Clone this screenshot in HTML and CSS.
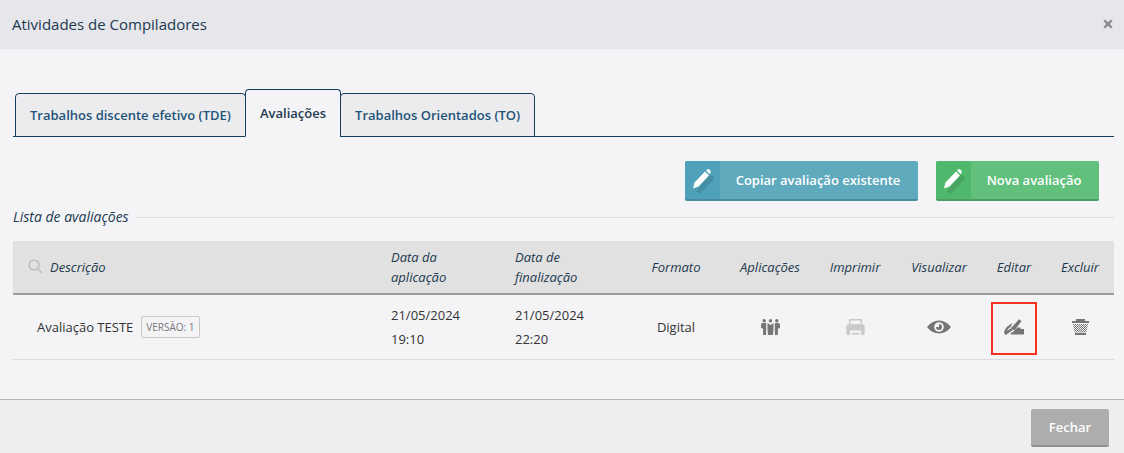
FILE: index.html
```html
<!DOCTYPE html>
<html lang="pt-BR">
<head>
<meta charset="utf-8">
<title>Atividades de Compiladores</title>
<link rel="stylesheet" href="styles.css">
</head>
<body>
<div class="modal">
  <header class="modal-header">
    <h1 class="modal-title">Atividades de Compiladores</h1>
    <svg class="close" viewBox="0 0 10 10" width="10" height="10"><path d="M2 0.500 5 3.200 8 0.500 9.600 2 6.800 5 9.600 8 8 9.500 5 6.800 2 9.500 0.400 8 3.200 5 0.400 2Z"/></svg>
  </header>
  <main class="modal-body">
    <nav class="tabs">
      <a class="tab">Trabalhos discente efetivo (TDE)</a>
      <a class="tab active">Avaliações</a>
      <a class="tab">Trabalhos Orientados (TO)</a>
    </nav>
    <div class="actions">
      <button class="btn btn-blue"><span class="btn-icon"><svg viewBox="0 0 35 38" width="35" height="38"><path class="shade" d="M11 30.500 24 14 29 15.500 28 19 15 32.500Z"/><path class="pen" d="M8 27.500 9.500 21.500 20 10.500 24 14.500 13.500 25.500Z"/><path class="pen" d="M21 9.500 22.500 8.300Q23.300 7.800 24.200 8.500L25.500 9.800Q26.200 10.600 25.500 11.500L24.800 13.300Z"/></svg></span><span class="btn-label">Copiar avaliação existente</span></button>
      <button class="btn btn-green"><span class="btn-icon"><svg viewBox="0 0 35 38" width="35" height="38"><path class="shade" d="M11 30.500 24 14 29 15.500 28 19 15 32.500Z"/><path class="pen" d="M8 27.500 9.500 21.500 20 10.500 24 14.500 13.500 25.500Z"/><path class="pen" d="M21 9.500 22.500 8.300Q23.300 7.800 24.200 8.500L25.500 9.800Q26.200 10.600 25.500 11.500L24.800 13.300Z"/></svg></span><span class="btn-label">Nova avaliação</span></button>
    </div>
    <div class="legend"><span class="legend-text">Lista de avaliações</span><span class="legend-line"></span></div>
    <div class="grid grid-head">
      <div class="cell-desc"><svg class="search" viewBox="0 0 16 16" width="15" height="15"><circle cx="6.500" cy="6.500" r="5.300"/><path d="M10.500 10.500 15 15"/></svg>Descrição</div>
      <div class="cell-left">Data da<br>aplicação</div>
      <div class="cell-left cell-third">Data de<br>finalização</div>
      <div class="cell-center">Formato</div>
      <div class="cell-center">Aplicações</div>
      <div class="cell-center">Imprimir</div>
      <div class="cell-center">Visualizar</div>
      <div class="cell-center">Editar</div>
      <div class="cell-center">Excluir</div>
    </div>
    <div class="grid grid-row">
      <div class="cell-name">Avaliação TESTE<span class="badge">VERSÃO: 1</span></div>
      <div class="cell-left dates">21/05/2024<br>19:10</div>
      <div class="cell-left cell-third dates">21/05/2024<br>22:20</div>
      <div class="cell-center">Digital</div>
      <div class="cell-center"><svg class="icon" viewBox="0 0 19 16" width="19" height="16"><circle cx="3.200" cy="1.700" r="1.700"/><circle cx="9.500" cy="1.700" r="1.700"/><circle cx="15.800" cy="1.700" r="1.700"/><path d="M0 5 1.500 4H5.200V10L5 16H2.200L2 9.500 0 9Z"/><path d="M6.500 4.200 8 5 9.500 6 11 5 12.500 4.200V10L12 16H7L6.500 10Z"/><path d="M19 5 17.500 4H13.800V10L14 16H16.800L17 9.500 19 9Z"/></svg></div>
      <div class="cell-center"><svg class="icon" viewBox="0 0 19 17" width="19" height="17"><path d="M3.700 .8H15.300V6H3.700Z" fill="none" stroke="#c8c8c8" stroke-width="1.500"/><path d="M1.500 5.500H17.500Q18.700 5.500 18.700 7V14.500Q18.700 16 17.500 16H15V11.500H4V16H1.500Q.3 16 .3 14.500V7Q.3 5.500 1.500 5.500Z" fill="#cacaca"/><path d="M5.500 13.500H13.500V16H5.500Z" fill="#d6d6d6"/></svg></div>
      <div class="cell-center"><svg class="icon" viewBox="0 0 24 14" width="24" height="14"><path fill-rule="evenodd" d="M0 7Q5 .5 12 .5T24 7Q19 13.500 12 13.500T0 7ZM12 2.200A4.800 4.800 0 1 0 12 11.800 4.800 4.800 0 1 0 12 2.200ZM12 4A3 3 0 1 1 9 7H12Z"/></svg></div>
      <div class="cell-center edit-cell"><svg class="icon" viewBox="0 0 20 16" width="20" height="16"><path d="M0 13Q1.500 7.500 8.500 4L6.500 8Q4 9.500 2.800 12Q5 10.200 7.500 9.500L8.500 11.500Q5.500 12.500 3.500 15L1 16Z"/><path d="M6.500 9.500 15 .3 17.500 2 10.500 11.500Z"/><path d="M9.500 12.500 13.500 8.500H16.500V10H20V15.500H8Q5.500 15.500 7 14Z"/></svg><span class="highlight"></span></div>
      <div class="cell-center"><svg class="icon" viewBox="0 0 17 16" width="17" height="16"><defs><pattern id="dither" width="2" height="2" patternUnits="userSpaceOnUse"><rect width="1" height="1"/><rect x="1" y="1" width="1" height="1"/></pattern></defs><path d="M4 0H13V2H4Z"/><path d="M0 2H17V4H0Z"/><path d="M1 5H16L14.500 13.500H2.500Z" fill="url(#dither)"/><path d="M3 14H14V16H3Z"/></svg></div>
    </div>
  </main>
  <footer class="modal-footer"><button class="btn-close">Fechar</button></footer>
</div>
</body>
</html>
```
FILE: styles.css
```css
* { box-sizing: border-box; }
html, body { margin: 0; height: 100%; overflow: hidden; }
body { font-family: "Open Sans", sans-serif; color: #333; background: #f4f4f7; }
.modal { width: 1124px; height: 453px; display: flex; flex-direction: column; }
.modal-header { height: 49px; flex: none; background: #e6e6eb; display: flex; align-items: center; justify-content: space-between; padding: 0 11px 0 12px; }
.modal-title { margin: 0; font-size: 15px; font-weight: 400; color: #22394f; line-height: 49px; }
.close { fill: #8c8c8c; margin-bottom: 2px; }
.modal-body { flex: 1; padding: 40px 10px 0 13px; display: flex; flex-direction: column; }
.tabs { display: flex; align-items: flex-end; height: 48px; padding-left: 2px; border-bottom: 1px solid #133f5c; flex: none; }
.tab { height: 44px; margin-bottom: -1px; padding: 0 14px; border: 1px solid #133f5c; border-radius: 4px 4px 0 0; background: #ececef; color: #225378; font-size: 13px; font-weight: 600; line-height: 43px; white-space: nowrap; margin-right: -1px; }
.tab.active { height: 48px; background: #f4f4f7; border-bottom-color: #f4f4f7; color: #1f3b52; padding-bottom: 4px; line-height: 46px; }
.actions { display: flex; justify-content: flex-end; gap: 18px; margin-top: 24px; padding-right: 15px; flex: none; }
.btn { display: flex; align-items: stretch; height: 40px; padding: 0; border: 0; border-radius: 2px; font-family: inherit; font-size: 13px; font-weight: 600; color: #fff; }
.btn-icon { width: 35px; display: block; height: 38px; overflow: hidden; border-radius: 2px 0 0 0; }
.btn-icon svg { display: block; }
.pen { fill: #fff; }
.btn-label { display: block; line-height: 38px; text-align: center; flex: 1; padding-right: 2px; }
.btn-blue { width: 233px; background: #60aabe; border-bottom: 2px solid #4a8a9d; }
.btn-blue .btn-icon { background: #4ea1b8; }
.btn-blue .shade { fill: #438ea3; }
.btn-green { width: 163px; background: #60c07c; border-bottom: 2px solid #4a9d63; }
.btn-green .btn-icon { background: #50b86c; }
.btn-green .shade { fill: #47a361; }
.legend { display: flex; align-items: center; height: 20px; margin-top: 6px; flex: none; }
.legend-text { font-size: 14px; font-style: italic; color: #22394f; line-height: 20px; }
.legend-line { flex: 1; height: 1px; background: #dcdcdf; margin: 0 0 0 8px; }
.grid { display: grid; grid-template-columns: 366px 123px 124px 100px 88px 82px 86px 64px 68px; align-items: center; width: 1101px; flex: none; }
.grid-head { height: 54px; margin-top: 14px; padding-bottom: 1px; background: #e1e1e1; border-bottom: 2px solid #9b9ba0; font-size: 13px; font-style: italic; color: #22394f; line-height: 20px; }
.grid-row { height: 65px; border-bottom: 1px solid #dcdcdf; font-size: 13px; color: #333; line-height: 24px; }
.cell-desc { display: flex; align-items: center; padding-left: 15px; }
.search { fill: none; stroke: #bbb; stroke-width: 1.500; margin-right: 7px; }
.cell-left { padding-left: 12px; }
.cell-third { padding-left: 13px; }
.cell-center { text-align: center; display: flex; justify-content: center; align-items: center; }
.cell-name { display: flex; align-items: center; padding-left: 24px; }
.badge { margin-left: 8px; padding: 0 4px; height: 22px; border: 1px solid #c8c8c8; border-radius: 2px; font-size: 10px; line-height: 20px; color: #777; }
.icon { fill: #757575; }
.edit-cell { position: relative; }
.highlight { position: absolute; left: 9px; top: -17px; width: 46px; height: 53px; border: 2px solid #f5321f; }
.modal-footer { height: 54px; flex: none; background: #eee; border-top: 1px solid #b5b5ae; display: flex; justify-content: flex-end; padding: 9px 15px 0 0; }
.btn-close { width: 78px; height: 38px; border: 0; border-bottom: 2px solid #8f8f8f; border-radius: 2px; background: #adadad; color: #fff; font-family: inherit; font-size: 13px; font-weight: 600; }
```
